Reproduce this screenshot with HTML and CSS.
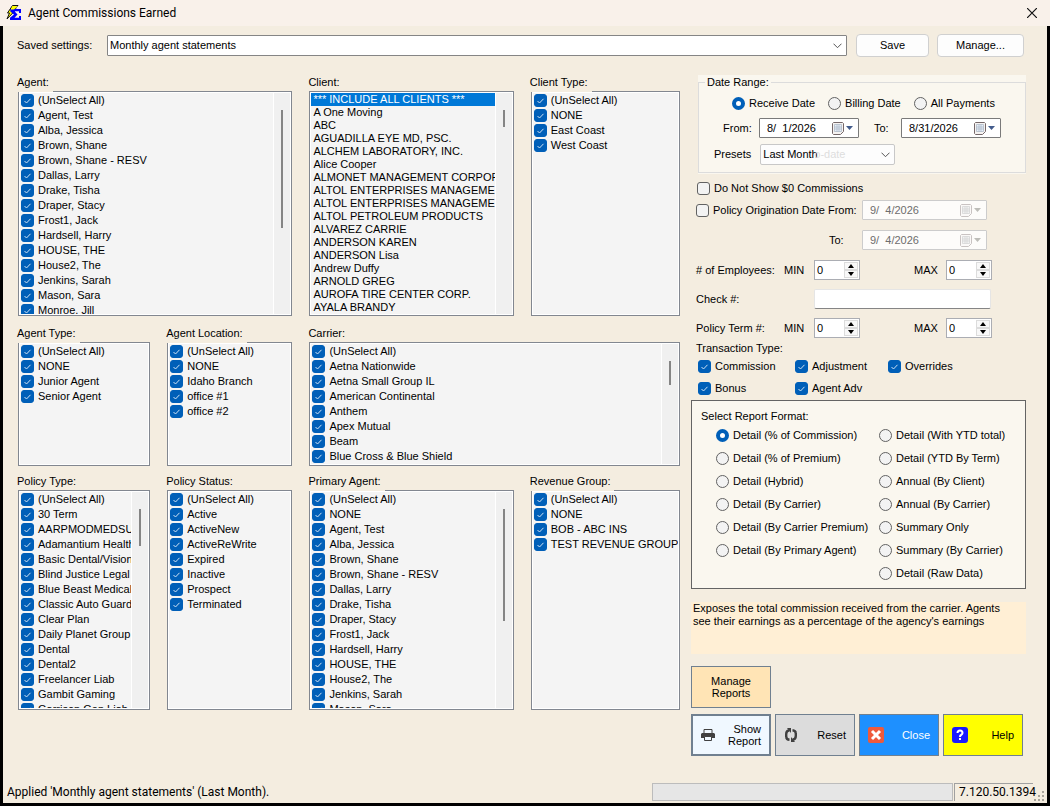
FILE: index.html
```html
<!DOCTYPE html>
<html lang="en">
<head>
<meta charset="utf-8">
<title>Agent Commissions Earned</title>
<link rel="stylesheet" href="styles.css">
</head>
<body>
<header class="titlebar">
  <svg class="app-icon" viewBox="0 0 16 16" width="16" height="16" aria-hidden="true"><path d="M6.500 .5h5.500L8.500 4h2L1 14l2.500-6H1.500z" fill="#ff0" stroke="#111"/><path d="M4 4h11v4h-2V6.200H8.500L11.500 9.500l-3 3.300H13V11h2v4H4v-2.200l4-3.300L4 6.200z" fill="#00f"/><path d="M6.500 1h5L8 4.500H5.500L3.500 8z" fill="#ff0"/></svg>
  <h1 class="title">Agent Commissions Earned</h1>
  <button class="win-close" aria-label="Close window"><svg viewBox="0 0 10 10" width="10" height="10"><path d="M0 0L10 10M10 0L0 10" stroke="#111" stroke-width="1.200"/></svg></button>
</header>
<main class="window">
  <div class="settings">
    <label class="settings-label" for="saved">Saved settings:</label>
    <select class="combo combo-main" id="saved"><option>Monthly agent statements</option></select>
    <button class="btn btn-save">Save</button>
    <button class="btn btn-manage">Manage...</button>
  </div>
  <div class="content">
    <div class="filters">
      <section class="field span2 row-tall">
        <h2 class="label label-over">Agent:</h2>
        <div class="list list-l">
          <div class="items">
            <label class="item"><input type="checkbox" checked>(UnSelect All)</label>
            <label class="item"><input type="checkbox" checked>Agent, Test</label>
            <label class="item"><input type="checkbox" checked>Alba, Jessica</label>
            <label class="item"><input type="checkbox" checked>Brown, Shane</label>
            <label class="item"><input type="checkbox" checked>Brown, Shane - RESV</label>
            <label class="item"><input type="checkbox" checked>Dallas, Larry</label>
            <label class="item"><input type="checkbox" checked>Drake, Tisha</label>
            <label class="item"><input type="checkbox" checked>Draper, Stacy</label>
            <label class="item"><input type="checkbox" checked>Frost1, Jack</label>
            <label class="item"><input type="checkbox" checked>Hardsell, Harry</label>
            <label class="item"><input type="checkbox" checked>HOUSE, THE</label>
            <label class="item"><input type="checkbox" checked>House2, The</label>
            <label class="item"><input type="checkbox" checked>Jenkins, Sarah</label>
            <label class="item"><input type="checkbox" checked>Mason, Sara</label>
            <label class="item"><input type="checkbox" checked>Monroe, Jill</label>
          </div>
          <div class="bar"><div class="thumb thumb-xl"></div></div>
        </div>
      </section>
      <section class="field row-tall">
        <label class="label" for="client">Client:</label>
        <div class="list list-l">
          <select class="items clients" id="client" size="17">
            <option selected>*** INCLUDE ALL CLIENTS ***</option>
            <option>A One Moving</option>
            <option>ABC</option>
            <option>AGUADILLA EYE MD, PSC.</option>
            <option>ALCHEM LABORATORY, INC.</option>
            <option>Alice Cooper</option>
            <option>ALMONET MANAGEMENT CORPORATION</option>
            <option>ALTOL ENTERPRISES MANAGEMENT</option>
            <option>ALTOL ENTERPRISES MANAGEMENT</option>
            <option>ALTOL PETROLEUM PRODUCTS</option>
            <option>ALVAREZ CARRIE</option>
            <option>ANDERSON KAREN</option>
            <option>ANDERSON Lisa</option>
            <option>Andrew Duffy</option>
            <option>ARNOLD GREG</option>
            <option>AUROFA TIRE CENTER CORP.</option>
            <option>AYALA BRANDY</option>
          </select>
          <div class="bar"><div class="thumb thumb-s"></div></div>
        </div>
      </section>
      <section class="field row-tall">
        <h2 class="label label-over">Client Type:</h2>
        <div class="list list-l">
          <div class="items">
            <label class="item"><input type="checkbox" checked>(UnSelect All)</label>
            <label class="item"><input type="checkbox" checked>NONE</label>
            <label class="item"><input type="checkbox" checked>East Coast</label>
            <label class="item"><input type="checkbox" checked>West Coast</label>
          </div>
        </div>
      </section>
      <section class="field">
        <h2 class="label label-over">Agent Type:</h2>
        <div class="list list-s">
          <div class="items">
            <label class="item"><input type="checkbox" checked>(UnSelect All)</label>
            <label class="item"><input type="checkbox" checked>NONE</label>
            <label class="item"><input type="checkbox" checked>Junior Agent</label>
            <label class="item"><input type="checkbox" checked>Senior Agent</label>
          </div>
        </div>
      </section>
      <section class="field">
        <h2 class="label label-over">Agent Location:</h2>
        <div class="list list-s">
          <div class="items">
            <label class="item"><input type="checkbox" checked>(UnSelect All)</label>
            <label class="item"><input type="checkbox" checked>NONE</label>
            <label class="item"><input type="checkbox" checked>Idaho Branch</label>
            <label class="item"><input type="checkbox" checked>office #1</label>
            <label class="item"><input type="checkbox" checked>office #2</label>
          </div>
        </div>
      </section>
      <section class="field span2">
        <h2 class="label">Carrier:</h2>
        <div class="list list-s">
          <div class="items">
            <label class="item"><input type="checkbox" checked>(UnSelect All)</label>
            <label class="item"><input type="checkbox" checked>Aetna Nationwide</label>
            <label class="item"><input type="checkbox" checked>Aetna Small Group IL</label>
            <label class="item"><input type="checkbox" checked>American Continental</label>
            <label class="item"><input type="checkbox" checked>Anthem</label>
            <label class="item"><input type="checkbox" checked>Apex Mutual</label>
            <label class="item"><input type="checkbox" checked>Beam</label>
            <label class="item"><input type="checkbox" checked>Blue Cross &amp; Blue Shield</label>
          </div>
          <div class="bar"><div class="thumb thumb-m"></div></div>
        </div>
      </section>
      <section class="field">
        <h2 class="label">Policy Type:</h2>
        <div class="list list-m">
          <div class="items">
            <label class="item"><input type="checkbox" checked>(UnSelect All)</label>
            <label class="item"><input type="checkbox" checked>30 Term</label>
            <label class="item"><input type="checkbox" checked>AARPMODMEDSUP</label>
            <label class="item"><input type="checkbox" checked>Adamantium Health</label>
            <label class="item"><input type="checkbox" checked>Basic Dental/Vision</label>
            <label class="item"><input type="checkbox" checked>Blind Justice Legal</label>
            <label class="item"><input type="checkbox" checked>Blue Beast Medical</label>
            <label class="item"><input type="checkbox" checked>Classic Auto Guard</label>
            <label class="item"><input type="checkbox" checked>Clear Plan</label>
            <label class="item"><input type="checkbox" checked>Daily Planet Group</label>
            <label class="item"><input type="checkbox" checked>Dental</label>
            <label class="item"><input type="checkbox" checked>Dental2</label>
            <label class="item"><input type="checkbox" checked>Freelancer Liab</label>
            <label class="item"><input type="checkbox" checked>Gambit Gaming</label>
            <label class="item"><input type="checkbox" checked>Garrison Gen Liab</label>
          </div>
          <div class="bar"><div class="thumb thumb-p"></div></div>
        </div>
      </section>
      <section class="field">
        <h2 class="label">Policy Status:</h2>
        <div class="list list-m">
          <div class="items">
            <label class="item"><input type="checkbox" checked>(UnSelect All)</label>
            <label class="item"><input type="checkbox" checked>Active</label>
            <label class="item"><input type="checkbox" checked>ActiveNew</label>
            <label class="item"><input type="checkbox" checked>ActiveReWrite</label>
            <label class="item"><input type="checkbox" checked>Expired</label>
            <label class="item"><input type="checkbox" checked>Inactive</label>
            <label class="item"><input type="checkbox" checked>Prospect</label>
            <label class="item"><input type="checkbox" checked>Terminated</label>
          </div>
        </div>
      </section>
      <section class="field">
        <h2 class="label label-over">Primary Agent:</h2>
        <div class="list list-m">
          <div class="items">
            <label class="item"><input type="checkbox" checked>(UnSelect All)</label>
            <label class="item"><input type="checkbox" checked>NONE</label>
            <label class="item"><input type="checkbox" checked>Agent, Test</label>
            <label class="item"><input type="checkbox" checked>Alba, Jessica</label>
            <label class="item"><input type="checkbox" checked>Brown, Shane</label>
            <label class="item"><input type="checkbox" checked>Brown, Shane - RESV</label>
            <label class="item"><input type="checkbox" checked>Dallas, Larry</label>
            <label class="item"><input type="checkbox" checked>Drake, Tisha</label>
            <label class="item"><input type="checkbox" checked>Draper, Stacy</label>
            <label class="item"><input type="checkbox" checked>Frost1, Jack</label>
            <label class="item"><input type="checkbox" checked>Hardsell, Harry</label>
            <label class="item"><input type="checkbox" checked>HOUSE, THE</label>
            <label class="item"><input type="checkbox" checked>House2, The</label>
            <label class="item"><input type="checkbox" checked>Jenkins, Sarah</label>
            <label class="item"><input type="checkbox" checked>Mason, Sara</label>
          </div>
          <div class="bar"><div class="thumb thumb-l"></div></div>
        </div>
      </section>
      <section class="field">
        <h2 class="label label-over">Revenue Group:</h2>
        <div class="list list-m">
          <div class="items">
            <label class="item"><input type="checkbox" checked>(UnSelect All)</label>
            <label class="item"><input type="checkbox" checked>NONE</label>
            <label class="item"><input type="checkbox" checked>BOB - ABC INS</label>
            <label class="item"><input type="checkbox" checked>TEST REVENUE GROUP</label>
          </div>
        </div>
      </section>
    </div>

    <div class="options">
      <div class="group">
        <fieldset class="group-box">
          <legend>Date Range:</legend>
          <div class="radios">
            <label class="opt"><input type="radio" name="date" checked>Receive Date</label>
            <label class="opt"><input type="radio" name="date">Billing Date</label>
            <label class="opt"><input type="radio" name="date">All Payments</label>
          </div>
          <div class="dates">
            <label for="from">From:</label>
            <div class="date"><input id="from" type="text" value="8/  1/2026"><button class="date-btn" aria-label="Pick start date"><svg viewBox="0 0 22 13" width="22" height="13"><path d="M1.500 .5h9l1 1v8l-3 3h-7l-1-1v-10z" fill="#f6f3f1" stroke="#75686a"/><path d="M2.500 2.500h7v7h-7zM5 2.500v7M7 2.500v7M2.500 5h7M2.500 7h7" fill="#e6eef7" stroke="#a9b4c4" stroke-width=".7"/><path d="M14 4h7l-3.500 4z" fill="#435c8c"/></svg></button></div>
            <label class="to" for="to">To:</label>
            <div class="date"><input id="to" type="text" value="8/31/2026"><button class="date-btn" aria-label="Pick end date"><svg viewBox="0 0 22 13" width="22" height="13"><path d="M1.500 .5h9l1 1v8l-3 3h-7l-1-1v-10z" fill="#f6f3f1" stroke="#75686a"/><path d="M2.500 2.500h7v7h-7zM5 2.500v7M7 2.500v7M2.500 5h7M2.500 7h7" fill="#e6eef7" stroke="#a9b4c4" stroke-width=".7"/><path d="M14 4h7l-3.500 4z" fill="#435c8c"/></svg></button></div>
          </div>
          <div class="presets">
            <label for="presets">Presets</label>
            <div class="preset-wrap">
              <select class="combo combo-light" id="presets"><option>Last Month</option></select>
              <span class="ghost" aria-hidden="true">o-date</span>
            </div>
          </div>
        </fieldset>
      </div>

      <div class="line zero"><label class="opt"><input type="checkbox">Do Not Show $0 Commissions</label></div>
      <div class="line orig">
        <label class="opt orig-label"><input type="checkbox">Policy Origination Date From:</label>
        <div class="date date-off"><input type="text" aria-label="Origination from" value="9/  4/2026" disabled><button class="date-btn" aria-label="Pick origination start" disabled><svg viewBox="0 0 22 13" width="22" height="13"><path d="M1.500 .5h9l1 1v8l-3 3h-7l-1-1v-10z" fill="#fbf9f8" stroke="#c9c3c2"/><path d="M2.500 2.500h7v7h-7zM5 2.500v7M7 2.500v7M2.500 5h7M2.500 7h7" fill="#f2f2f2" stroke="#d3d3d3" stroke-width=".7"/><path d="M14 4h7l-3.500 4z" fill="#bdbdb8"/></svg></button></div>
      </div>
      <div class="line orig">
        <label class="orig-to" for="orig-to">To:</label>
        <div class="date date-off"><input id="orig-to" type="text" value="9/  4/2026" disabled><button class="date-btn" aria-label="Pick origination end" disabled><svg viewBox="0 0 22 13" width="22" height="13"><path d="M1.500 .5h9l1 1v8l-3 3h-7l-1-1v-10z" fill="#fbf9f8" stroke="#c9c3c2"/><path d="M2.500 2.500h7v7h-7zM5 2.500v7M7 2.500v7M2.500 5h7M2.500 7h7" fill="#f2f2f2" stroke="#d3d3d3" stroke-width=".7"/><path d="M14 4h7l-3.500 4z" fill="#bdbdb8"/></svg></button></div>
      </div>
      <div class="line range">
        <span class="range-name"># of Employees:</span>
        <label class="range-min" for="emp-min">MIN</label>
        <div class="spin"><input id="emp-min" type="text" value="0"><div class="arrows"><button aria-label="Increase"><svg viewBox="0 0 6 4" width="6" height="4"><path d="M0 4h6L3 0z"/></svg></button><button aria-label="Decrease"><svg viewBox="0 0 6 4" width="6" height="4"><path d="M0 0h6L3 4z"/></svg></button></div></div>
        <label class="range-max" for="emp-max">MAX</label>
        <div class="spin"><input id="emp-max" type="text" value="0"><div class="arrows"><button aria-label="Increase"><svg viewBox="0 0 6 4" width="6" height="4"><path d="M0 4h6L3 0z"/></svg></button><button aria-label="Decrease"><svg viewBox="0 0 6 4" width="6" height="4"><path d="M0 0h6L3 4z"/></svg></button></div></div>
      </div>
      <div class="line range">
        <label class="check-name" for="check">Check #:</label>
        <input class="check-input" id="check" type="text">
      </div>
      <div class="line range term">
        <span class="range-name">Policy Term #:</span>
        <label class="range-min" for="term-min">MIN</label>
        <div class="spin"><input id="term-min" type="text" value="0"><div class="arrows"><button aria-label="Increase"><svg viewBox="0 0 6 4" width="6" height="4"><path d="M0 4h6L3 0z"/></svg></button><button aria-label="Decrease"><svg viewBox="0 0 6 4" width="6" height="4"><path d="M0 0h6L3 4z"/></svg></button></div></div>
        <label class="range-max" for="term-max">MAX</label>
        <div class="spin"><input id="term-max" type="text" value="0"><div class="arrows"><button aria-label="Increase"><svg viewBox="0 0 6 4" width="6" height="4"><path d="M0 4h6L3 0z"/></svg></button><button aria-label="Decrease"><svg viewBox="0 0 6 4" width="6" height="4"><path d="M0 0h6L3 4z"/></svg></button></div></div>
      </div>
      <h2 class="trans-title">Transaction Type:</h2>
      <div class="trans">
        <label class="opt"><input type="checkbox" checked>Commission</label>
        <label class="opt"><input type="checkbox" checked>Adjustment</label>
        <label class="opt"><input type="checkbox" checked>Overrides</label>
        <label class="opt"><input type="checkbox" checked>Bonus</label>
        <label class="opt"><input type="checkbox" checked>Agent Adv</label>
      </div>

      <section class="format">
        <h2 class="format-title">Select Report Format:</h2>
        <div class="format-grid">
          <label class="opt"><input type="radio" name="fmt" checked>Detail (% of Commission)</label>
          <label class="opt"><input type="radio" name="fmt">Detail (With YTD total)</label>
          <label class="opt"><input type="radio" name="fmt">Detail (% of Premium)</label>
          <label class="opt"><input type="radio" name="fmt">Detail (YTD By Term)</label>
          <label class="opt"><input type="radio" name="fmt">Detail (Hybrid)</label>
          <label class="opt"><input type="radio" name="fmt">Annual (By Client)</label>
          <label class="opt"><input type="radio" name="fmt">Detail (By Carrier)</label>
          <label class="opt"><input type="radio" name="fmt">Annual (By Carrier)</label>
          <label class="opt"><input type="radio" name="fmt">Detail (By Carrier Premium)</label>
          <label class="opt"><input type="radio" name="fmt">Summary Only</label>
          <label class="opt"><input type="radio" name="fmt">Detail (By Primary Agent)</label>
          <label class="opt"><input type="radio" name="fmt">Summary (By Carrier)</label>
          <label class="opt second"><input type="radio" name="fmt">Detail (Raw Data)</label>
        </div>
      </section>
      <p class="hint">Exposes the total commission received from the carrier. Agents see their earnings as a percentage of the agency's earnings</p>
      <div class="actions">
        <button class="act act-reports">Manage Reports</button>
        <button class="act act-show"><svg viewBox="0 0 14 12" width="14" height="12"><path d="M3 .5h8v4H3z" fill="#f0f8ff" stroke="#404040"/><path d="M1 4h12l1 1v4H0V5z" fill="#404040"/><path d="M3.500 7.500h7v4h-7z" fill="#f0f8ff" stroke="#404040"/></svg><span>Show Report</span></button>
        <button class="act act-reset"><svg viewBox="0 0 14 14" width="14" height="14"><g fill="none" stroke="#404040" stroke-width="2.400"><path d="M5.500 2.200Q2.200 2.500 2.200 6v3"/><path d="M8.500 11.800Q11.800 11.500 11.800 8V5"/><path d="M2.200 9Q2.500 11.500 5.500 11.800M11.800 5Q11.500 2.500 8.500 2.200"/></g><path d="M3 0h4v5zM11 14H7V9z" fill="#404040"/></svg><span>Reset</span></button>
        <button class="act act-close"><svg viewBox="0 0 16 16" width="16" height="16"><rect width="16" height="16" rx="2" fill="#ee5a3c"/><path d="M4 4l8 8M12 4l-8 8" stroke="#fff" stroke-width="3"/></svg><span>Close</span></button>
        <button class="act act-help"><svg viewBox="0 0 16 16" width="16" height="16"><rect width="16" height="16" rx="3" fill="#1a1aff"/><path d="M5.500 6Q5.500 3.500 8 3.500T10.500 6Q10.500 7.200 9 8Q8 8.500 8 10" fill="none" stroke="#fff" stroke-width="2"/><path d="M7 11h2v2H7z" fill="#fff"/></svg><span>Help</span></button>
      </div>
    </div>
  </div>
  <footer class="status">
    <span class="status-text">Applied 'Monthly agent statements' (Last Month).</span>
    <div class="progress" role="progressbar" aria-label="Progress"></div>
    <span class="version">7.120.50.1394</span>
    <svg class="grip" viewBox="0 0 10 10" width="10" height="10" aria-hidden="true"><path d="M8 0h2v2H8zM4 4h2v2H4zM8 4h2v2H8zM0 8h2v2H0zM4 8h2v2H4zM8 8h2v2H8z" fill="#a8a49b"/></svg>
  </footer>
</main>
</body>
</html>
```
FILE: styles.css
```css
* { box-sizing: border-box; }

body {
  margin: 0;
  min-height: 100vh;
  display: flex;
  flex-direction: column;
  background: #f4ede0;
  color: #000;
  font: 11px/13px "Liberation Sans", Arial, sans-serif;
}

button, input, select {
  margin: 0;
  padding: 0;
  border: 0;
  border-radius: 0;
  font: inherit;
  color: inherit;
}

h1, h2, p { margin: 0; font-size: 11px; font-weight: normal; }

/* Title bar */
.titlebar {
  display: flex;
  align-items: center;
  height: 26px;
  padding: 0 13px 0 6px;
  background: #f9f1ea;
}
.app-icon { margin-right: 6px; }
.title { flex: 1; font: 12px/16px Roboto, "Open Sans", sans-serif; }
.win-close { display: flex; background: none; }

.window {
  flex: 1;
  display: flex;
  flex-direction: column;
  border: solid #000;
  border-width: 0 3px 3px;
}

/* Saved settings */
.settings {
  display: flex;
  align-items: center;
  padding: 8px 23px 0 14px;
}
.settings-label { width: 90px; }
.btn {
  height: 23px;
  border: 1px solid #d0d0d0;
  border-radius: 4px;
  background: #fdfdfd;
}
.btn-save { width: 73px; margin-left: 9px; }
.btn-manage { width: 87px; margin-left: 8px; }
.combo {
  appearance: none;
  height: 21px;
  padding: 0 20px 0 2px;
  border: 1px solid #858585;
  border-radius: 1px;
  background: #fff url("data:image/svg+xml,%3Csvg xmlns='http://www.w3.org/2000/svg' width='9' height='6'%3E%3Cpath d='M.5 .7l4 4 4-4' fill='none' stroke='%23555'/%3E%3C/svg%3E") no-repeat right 4px center;
}
.combo-main { flex: 1; min-width: 0; }
.combo-light { width: 100%; border-color: #c8c8c8; border-radius: 2px; background-color: #fdfdfd; }

/* Two main areas */
.content {
  display: flex;
  align-items: flex-start;
  gap: 11px;
  padding: 18px 21px 0 14px;
}
.filters {
  flex: 1;
  display: grid;
  grid-template-columns: minmax(0, 133fr) minmax(0, 126fr) minmax(0, 205fr) minmax(0, 150fr);
  gap: 8px 16px;
}
.field {
  display: flex;
  flex-direction: column;
  align-items: flex-start;
}
.span2 { grid-column: span 2; }
.row-tall { padding-bottom: 2px; }
.label { height: 16px; line-height: 14px; }
.label-over {
  position: relative;
  z-index: 1;
  height: 17px;
  margin-bottom: -1px;
  padding-right: 4px;
  background: #f4ede0;
}
.list {
  align-self: stretch;
  display: flex;
  gap: 1px;
  margin-left: 1px;
  padding: 1px;
  border: 1px solid #828790;
  background: #fff;
}
.list-l { height: 225px; }
.list-s { height: 124px; }
.list-m { height: 220px; }
.items {
  flex: 1;
  min-width: 0;
  overflow: hidden;
  background: #f4f4f4;
}
.item {
  display: flex;
  align-items: center;
  gap: 4px;
  height: 15px;
  padding-left: 1px;
  white-space: nowrap;
}
.clients { appearance: none; outline: 0; }
.clients option { min-height: 13px; height: 13px; padding: 0 0 0 2px; line-height: 13px; }
.clients option:checked {
  background: linear-gradient(#0078d7, #0078d7);
  -webkit-text-fill-color: #fff;
}
.bar {
  width: 16px;
  padding: 17px 0 0 7px;
  background: #f0f0f0;
}
.thumb { width: 2px; background: #858585; }
.thumb-s { height: 17px; }
.thumb-m { height: 24px; }
.thumb-p { height: 37px; }
.thumb-l { height: 112px; }
.thumb-xl { height: 118px; }

/* Tick boxes and radios */
input[type="checkbox"], input[type="radio"] {
  appearance: none;
  flex: none;
  width: 13px;
  height: 13px;
  border: 1px solid #626262;
  border-radius: 3px;
  background: #f3f3f3;
}
input[type="radio"] { border-radius: 50%; }
input[type="checkbox"]:checked {
  border-color: #005fb8;
  background: #005fb8 url("data:image/svg+xml,%3Csvg xmlns='http://www.w3.org/2000/svg' width='11' height='11'%3E%3Cpath d='M2.500 6l2 2 4-4.200' fill='none' stroke='%23cfe2f5'/%3E%3C/svg%3E");
}
input[type="radio"]:checked { border: 4px solid #005fb8; background: #fff; }
.opt { display: flex; align-items: center; gap: 4px; white-space: nowrap; }

/* Right column */
.options { width: 335px; }
.group {
  margin-left: 7px;
  padding-bottom: 1px;
  background: #faf7ef;
}
.group-box {
  min-width: 0;
  margin: 0;
  padding: 8px 0 7px;
  border: 1px solid #dcdcdc;
}
.group-box legend { margin-left: 6px; padding: 0 2px; line-height: 14px; }
.radios { display: flex; gap: 13px; padding-left: 33px; }
.dates {
  display: grid;
  grid-template-columns: 36px 100px 42px 100px;
  align-items: center;
  margin-top: 8px;
  padding-left: 24px;
}
.to { padding-left: 15px; }
.date {
  display: flex;
  align-items: center;
  height: 20px;
  padding: 0 4px 0 7px;
  border: 1px solid #7a7a7a;
  border-radius: 1px;
  background: #fff;
}
.date input { flex: 1; min-width: 0; width: 0; background: none; }
.date-btn { display: flex; background: none; }
.date-off { border-color: #ccc; color: #6d6d6d; background: #fdfcfa; }
.presets {
  display: flex;
  align-items: center;
  gap: 9px;
  margin-top: 6px;
  padding-left: 15px;
}
.preset-wrap { position: relative; width: 135px; }
.ghost {
  position: absolute;
  top: 4px;
  left: 54px;
  color: #dedede;
}

.line { display: flex; align-items: center; height: 20px; margin-bottom: 10px; padding-left: 5px; }
.zero { margin: 4px 0 2px; padding-left: 6px; }
.orig .date { width: 125px; }
.orig-label { width: 166px; }
.orig-to { width: 33px; margin-left: 133px; }
.range { margin-bottom: 9px; }
.range-name { width: 88px; }
.range-min { width: 30px; }
.range-max { width: 32px; margin-left: 54px; }
.term { margin-bottom: 3px; }
.spin {
  display: flex;
  width: 46px;
  height: 20px;
  padding: 1px;
  border: 1px solid #abadb3;
  background: #fff;
}
.spin input { flex: 1; min-width: 0; width: 0; padding-left: 1px; }
.arrows { display: flex; flex-direction: column; width: 14px; }
.arrows button {
  flex: 1;
  display: flex;
  align-items: center;
  justify-content: center;
  border: 1px solid #dcdcdc;
  background: #f8f8f8;
}
.check-name { width: 118px; }
.check-input {
  width: 177px;
  height: 20px;
  padding: 0 3px;
  border: 1px solid #e5e5e5;
  border-bottom-color: #858585;
  border-radius: 2px;
  background: #fff;
}
.trans-title { padding-left: 5px; line-height: 14px; }
.trans {
  display: grid;
  grid-template-columns: 97px 93px 1fr;
  gap: 9px 0;
  padding: 5px 0 5px 7px;
}

.format {
  padding: 8px 0 8px 9px;
  border: 1px solid #646464;
  background: #faf7ef;
}
.format-title { line-height: 14px; }
.format-grid {
  display: grid;
  grid-template-columns: 163px 1fr;
  gap: 10px 0;
  padding: 6px 0 0 15px;
}
.second { grid-column: 2; }
.hint {
  min-height: 52px;
  margin-top: 13px;
  padding: 0 10px 0 2px;
  background: #ffefd5;
}
.actions {
  display: grid;
  grid-template-columns: repeat(4, 80px);
  gap: 6px 4px;
  margin-top: 12px;
}
.act {
  display: flex;
  align-items: center;
  justify-content: space-between;
  height: 42px;
  padding: 0 8px;
  border: 1px solid #708090;
  line-height: 12px;
  text-align: right;
}
.act span { max-width: 40px; }
.act-reports { grid-column: 1 / 2; padding: 0 16px; background: #ffe4b5; text-align: center; }
.act-show { grid-column: 1; border-width: 2px; background: #f0f8ff; }
.act-reset { background: #dcdcdc; }
.act-close { background: #1e90ff; color: #fff; }
.act-help { background: #ff0; }

/* Status bar */
.status {
  display: flex;
  align-items: center;
  margin-top: auto;
  padding: 0 3px 2px 4px;
  font: 12px/17px Roboto, "Open Sans", sans-serif;
}
.status-text { flex: 1; }
.progress { width: 301px; height: 18px; border: 1px solid #bcbcbc; background: #e6e6e6; }
.version {
  width: 79px;
  height: 18px;
  margin-left: 1px;
  padding-left: 4px;
  border: solid #a0a0a0;
  border-width: 1px 0 0 1px;
}
.grip { margin-left: 1px; align-self: flex-end; }
```
